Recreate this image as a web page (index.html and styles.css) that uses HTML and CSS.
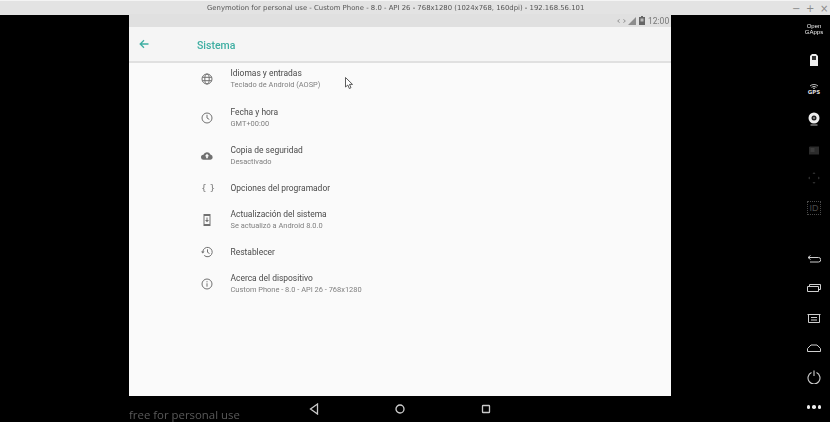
FILE: index.html
```html
<!DOCTYPE html>
<html lang="es">
<head>
<meta charset="utf-8">
<title>Genymotion</title>
<link rel="stylesheet" href="styles.css">
</head>
<body>
<header class="titlebar">
  <span class="title">Genymotion for personal use - Custom Phone - 8.0 - API 26 - 768x1280 (1024x768, 160dpi) - 192.168.56.101</span>
  <div class="winbtns"><span>−</span><span>+</span><span>×</span></div>
</header>
<div class="desk">
  <div class="stage">
    <main class="phone">
      <div class="status">
        <svg class="st-arrows" viewBox="0 0 10 6" width="9" height="6"><path d="M3 .8.8 3 3 5.200M7 .8 9.200 3 7 5.200M.8 3h1.500M7.700 3h1.500" fill="none" stroke="#8a8a8a" stroke-width=".8"/></svg>
        <svg class="st-signal" viewBox="0 0 8 8" width="8" height="8"><path d="M8 0v8H0z" fill="#8d8d8d"/></svg>
        <svg class="st-batt" viewBox="0 0 6 9" width="6" height="9"><path d="M2 0h2v1h2v8H0V1h2z" fill="#666"/><path d="M1.500 2.500h3v3h-3z" fill="#bbb"/></svg>
        <span class="clock">12:00</span>
      </div>
      <div class="appbar">
        <svg class="back" viewBox="0 0 10 10" width="10" height="10"><path d="M9.500 5H1.200M5 1.200 1.200 5 5 8.800" fill="none" stroke="#3eaea2" stroke-width="1.300"/></svg>
        <h1>Sistema</h1>
      </div>
      <ul class="list">
        <li class="row">
          <svg class="ico" viewBox="0 0 12 12"><g fill="none" stroke="#707070" stroke-width="1"><circle cx="6" cy="6" r="5"/><ellipse cx="6" cy="6" rx="2.200" ry="5"/><path d="M1.300 4.300h9.400M1.300 7.700h9.400"/></g></svg>
          <div><div class="main">Idiomas y entradas</div><div class="sub">Teclado de Android (AOSP)</div></div>
        </li>
        <li class="row">
          <svg class="ico" viewBox="0 0 12 12"><g fill="none" stroke="#707070" stroke-width="1"><circle cx="6" cy="6" r="5"/><path d="M6 2.800V6l2.300 1.400"/></g></svg>
          <div><div class="main">Fecha y hora</div><div class="sub">GMT+00:00</div></div>
        </li>
        <li class="row">
          <svg class="ico" viewBox="0 0 14 12"><path d="M3.200 10.500a3 3 0 0 1-.4-6A4.500 4.500 0 0 1 11 4.200a3.200 3.200 0 0 1 0 6.300z" fill="#707070"/><path d="M7 3.500 9.500 6.300H8v2.400H6V6.300H4.500z" fill="#fafafa"/></svg>
          <div><div class="main">Copia de seguridad</div><div class="sub">Desactivado</div></div>
        </li>
        <li class="row">
          <span class="ico braces">{ }</span>
          <div><div class="main">Opciones del programador</div></div>
        </li>
        <li class="row">
          <svg class="ico" viewBox="0 0 12 12"><path d="M2.500 0h7v12h-7z" fill="#707070"/><path d="M3.500 2h5v8h-5z" fill="#fafafa"/><path d="M5.500 3.500h1v2.500H8L6 8.300 4 6h1.500z" fill="#707070"/></svg>
          <div><div class="main">Actualización del sistema</div><div class="sub">Se actualizó a Android 8.0.0</div></div>
        </li>
        <li class="row">
          <svg class="ico" viewBox="0 0 12 12"><g fill="none" stroke="#707070" stroke-width="1"><path d="M1.800 6A4.700 4.700 0 1 1 3.200 9.400"/><path d="M6.500 3.300v3l2 1.200"/></g><path d="M0 5.500h3.600L1.800 7.500z" fill="#707070"/></svg>
          <div><div class="main">Restablecer</div></div>
        </li>
        <li class="row">
          <svg class="ico" viewBox="0 0 12 12"><g fill="none" stroke="#707070" stroke-width="1"><circle cx="6" cy="6" r="5"/><path d="M6 5.300v3.400M6 3.200v1.100"/></g></svg>
          <div><div class="main">Acerca del dispositivo</div><div class="sub">Custom Phone - 8.0 - API 26 - 768x1280</div></div>
        </li>
      </ul>
      <svg class="cursor" viewBox="0 0 8 13" width="8" height="13"><path d="M.5.500v9.500l2.300-2 1.500 3.500 1.700-.8-1.500-3.300h3z" fill="#fff" stroke="#333" stroke-width=".8"/></svg>
    </main>
    <nav class="navbar">
      <span class="free">free for personal use</span>
      <svg class="nav-back" viewBox="0 0 10 12" width="10" height="12"><path d="M8.500 1 1.500 6l7 5z" fill="none" stroke="#c8c8c8" stroke-width="1.300"/></svg>
      <svg class="nav-home" viewBox="0 0 10 10" width="10" height="10"><circle cx="5" cy="5" r="4" fill="none" stroke="#d0d0d0" stroke-width="1.300"/></svg>
      <svg class="nav-recent" viewBox="0 0 10 10" width="10" height="10"><rect x="1.500" y="1.500" width="7" height="7" rx=".6" fill="none" stroke="#c8c8c8" stroke-width="1.300"/></svg>
    </nav>
  </div>
  <aside class="rail">
    <div class="r-item r-gapps"><span>Open</span><span>GApps</span></div>
    <div class="r-item"><svg viewBox="0 0 8 12" width="8" height="12"><path d="M2 0h4l2 2v10H0V2z" fill="#eee"/><path d="M2 2h4v4H2z" fill="#333"/></svg></div>
    <div class="r-item r-gps"><svg viewBox="0 0 10 5" width="10" height="5"><path d="M1 2a6 6 0 0 1 8 0M2.500 3.300a4 4 0 0 1 5 0" fill="none" stroke="#ccc" stroke-width=".9"/><circle cx="5" cy="4.300" r=".8" fill="#ccc"/></svg><span>GPS</span></div>
    <div class="r-item"><svg viewBox="0 0 12 14" width="12" height="14"><circle cx="6" cy="6" r="5.500" fill="#eee"/><circle cx="6" cy="6" r="2.500" fill="#222"/><circle cx="6" cy="6" r="1" fill="#999"/><path d="M2.500 12.500h7v1h-7z" fill="#bbb"/></svg></div>
    <div class="r-item"><svg viewBox="0 0 10 12" width="10" height="12"><path d="M8 0 1 3.500h9v8H0V4z" fill="#2b2b2b"/><path d="M1.500 6h4M1.500 8h4" stroke="#555" stroke-width=".8"/></svg></div>
    <div class="r-item"><svg viewBox="0 0 12 12" width="12" height="12"><path d="M6 0 7.500 2h-3zM6 12 4.500 10h3zM0 6l2-1.500v3zM12 6l-2 1.500v-3z" fill="#2e2e2e"/></svg></div>
    <div class="r-item"><span class="r-id">ID</span></div>
    <div class="r-gap"></div>
    <div class="r-item"><svg viewBox="0 0 14 8" width="14" height="8"><path d="M1 2.500h10.500a2 2 0 0 1 0 4.500H3M3.500.5 1 2.500l2.500 2" fill="none" stroke="#cfcfcf"/></svg></div>
    <div class="r-item"><svg viewBox="0 0 14 8" width="14" height="8"><path d="M.5 2.500h11v5H.5zM2.500 2.500V.5h11v5h-2" fill="none" stroke="#cfcfcf"/></svg></div>
    <div class="r-item"><svg viewBox="0 0 14 9" width="14" height="9"><path d="M.5.500h13M1.500 1v7.500h11V1M4 3.500h6M4 6h6" fill="none" stroke="#cfcfcf"/></svg></div>
    <div class="r-item"><svg viewBox="0 0 14 8" width="14" height="8"><path d="M.5 7.500v-3L4 1h6l3.500 3.500v3z" fill="none" stroke="#cfcfcf"/></svg></div>
    <div class="r-item"><svg viewBox="0 0 14 14" width="14" height="14"><path d="M4.500 2.500a6 6 0 1 0 5 0M7 .5V6" fill="none" stroke="#cfcfcf" stroke-width="1.100"/></svg></div>
    <div class="r-item r-dots"><i></i><i></i><i></i></div>
  </aside>
</div>
</body>
</html>
```
FILE: styles.css
```css
* { box-sizing: border-box; }
html, body { margin: 0; height: 100%; }
body {
  width: 830px;
  height: 422px;
  overflow: hidden;
  background: #000;
  display: flex;
  flex-direction: column;
  font-family: Roboto, "Liberation Sans", sans-serif;
}
.titlebar {
  height: 15px;
  flex: none;
  background: #e3e3e3;
  border-top: 1px solid #f4f4f4;
  display: flex;
  align-items: center;
  justify-content: space-between;
  padding: 0 2px 0 207px;
}
.title {
  font: 6.900px "DejaVu Sans", sans-serif;
  color: #555;
  white-space: nowrap;
  filter: blur(.3px);
}
.winbtns {
  display: flex;
  gap: 6px;
  width: 36px;
  font: 10px "DejaVu Sans", sans-serif;
  color: #8a8a8a;
}
.winbtns span { width: 8px; text-align: center; }
.desk { flex: 1; display: flex; min-height: 0; }
.stage {
  margin-left: 129px;
  width: 542px;
  display: flex;
  flex-direction: column;
}
.phone {
  height: 382px;
  flex: none;
  position: relative;
  overflow: hidden;
  background: #fafafa;
  margin-top: -1px;
}
.status {
  height: 13px;
  background: #e0e0e0;
  display: flex;
  align-items: center;
  justify-content: flex-end;
  padding-right: 3px;
  color: #777;
}
.st-arrows { margin-right: 2px; }
.st-signal { margin-right: 3px; }
.st-batt { margin-right: 3px; }
.clock { font-size: 8.500px; line-height: 13px; width: 20px; margin-top: 1px; filter: blur(.3px); }
.appbar {
  position: relative;
  z-index: 1;
  height: 36px;
  background: #f5f5f5;
  border-bottom: 2px solid #e0e0e0;
  display: flex;
  align-items: center;
  padding-left: 10px;
}
.back { margin-right: 48px; }
.appbar h1 {
  margin: 2px 0 0;
  font-size: 10.500px;
  font-weight: 500;
  color: #3eaea2;
  filter: blur(.3px);
}
.list { list-style: none; margin: -3px 0 0; padding: 0; }
.row {
  display: flex;
  align-items: center;
  height: 25.600px;
  padding-left: 72px;
}
.row:has(.sub) { height: 38.400px; }
.ico {
  width: 12px;
  height: 12px;
  flex: none;
  margin-right: 17.500px;
  overflow: visible;
  filter: blur(.3px);
}
.braces {
  font: 9px "DejaVu Sans", sans-serif;
  color: #707070;
  line-height: 12px;
  text-align: center;
  white-space: nowrap;
}
.main {
  font-size: 8.450px;
  line-height: 12px;
  color: #4a4a4a;
  filter: blur(.3px);
}
.sub {
  font-size: 7.450px;
  line-height: 12px;
  color: #808080;
  filter: blur(.3px);
}
.cursor { position: absolute; left: 216px; top: 63px; }
.navbar {
  flex: 1;
  position: relative;
  display: flex;
  align-items: center;
  padding-bottom: 1px;
}
.free {
  position: absolute;
  left: 0;
  bottom: 0;
  font: 11.400px/15px "Open Sans", sans-serif;
  color: #5a5a5a;
  filter: blur(.3px);
}
.nav-back { margin-left: 180px; }
.nav-home { margin-left: 76px; }
.nav-recent { margin-left: 76px; }
.rail {
  margin-left: auto;
  width: 32px;
  display: flex;
  flex-direction: column;
  align-items: center;
}
.r-item {
  height: 29.700px;
  flex: none;
  display: flex;
  flex-direction: column;
  align-items: center;
  justify-content: center;
}
.r-gap { height: 21px; flex: none; }
.r-gapps {
  font: 6px/5.500px "Liberation Sans", sans-serif;
  color: #eee;
  filter: blur(.2px);
}
.r-gps span {
  font: bold 5.500px/6px "DejaVu Sans", sans-serif;
  color: #ddd;
}
.r-id {
  width: 14px;
  height: 14px;
  border: 1px dotted #4a4a4a;
  font: 9px/12px "Liberation Sans", sans-serif;
  color: #4a4a4a;
  text-align: center;
}
.r-dots { flex-direction: row; gap: 2px; }
.r-dots i { width: 3.500px; height: 3.500px; background: #eee; border-radius: 50%; }
```
